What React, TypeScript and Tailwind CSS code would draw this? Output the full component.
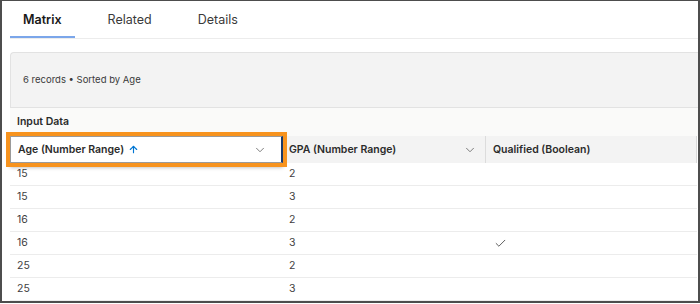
import { Check, ChevronDown, ArrowUp } from "lucide-react";

const rows = [
  { age: "15", gpa: "2", ok: false },
  { age: "15", gpa: "3", ok: false },
  { age: "16", gpa: "2", ok: false },
  { age: "16", gpa: "3", ok: true },
  { age: "25", gpa: "2", ok: false },
  { age: "25", gpa: "3", ok: false },
];

const tabs = ["Matrix", "Related", "Details"];

export default function App() {
  return (
    <div className="w-[700px] h-[304px] bg-white font-['Inter',sans-serif] text-[#181818]">
      <div className="h-[303px] border-t border-x-2 border-b-2 border-[#4d4d4d] overflow-hidden pl-2">
        {/* Tabs */}
        <div className="flex h-[38px] items-stretch gap-[20px] border-b border-[#ececec]">
          {tabs.map((t, i) => (
            <div
              key={t}
              className={
                i === 0
                  ? "flex items-center px-[13px] pt-[3px] text-[12.5px] font-semibold text-[#181818] border-b-2 border-[#7ba6ea]"
                  : "flex items-center px-[13px] pt-[3px] text-[12.5px] text-[#3a3a3a] border-b-2 border-transparent"
              }
            >
              {t}
            </div>
          ))}
        </div>

        <div className="mt-[13px]">
          {/* Summary panel */}
          <div className="h-[56px] rounded-tl-[4px] border border-r-0 border-[#e2e2e2] bg-[#f3f3f3] flex items-center pl-[12px] text-[9.5px] text-[#3a3a3a]">
            6 records • Sorted by Age
          </div>

          {/* Input Data */}
          <div className="h-[28px] bg-[#fafaf9] flex items-center pl-[7px] text-[10.5px] font-semibold text-[#2b2b2b]">
            Input Data
          </div>

          {/* Table */}
          <div className="pr-[1px]">
            <div className="relative flex h-[27px] bg-[#f3f3f3] border-r border-[#d9d9d9] text-[10.5px] font-semibold text-[#2b2b2b]">
              <div className="relative z-10 w-[273px] flex items-center justify-between bg-white pl-[7px] pr-[14px] border border-[#9a9a9a] border-r-2 border-r-[#1b3a6b] outline-4 outline-solid outline-[#f7931e] shadow-[0_4px_4px_rgba(0,0,0,0.35)]">
                <span className="flex items-center gap-[4px]">
                  Age (Number Range)
                  <ArrowUp size={11} strokeWidth={2.5} className="text-[#0176d3]" />
                </span>
                <ChevronDown size={14} strokeWidth={1.5} className="text-[#6b6b6b]" />
              </div>
              <div className="w-[203px] flex items-center justify-between pl-[6px] pr-[8px] border-r border-[#dcdcdc]">
                <span>GPA (Number Range)</span>
                <ChevronDown size={14} strokeWidth={1.5} className="text-[#6b6b6b]" />
              </div>
              <div className="flex-1 flex items-center pl-[7px]">Qualified (Boolean)</div>
            </div>

            {rows.map((r, i) => (
              <div
                key={i}
                className="flex h-[23px] bg-white border-b border-[#ececec] text-[10.5px] text-[#3e3e3e]"
              >
                <div className="w-[273px] flex items-center pl-[7px]">{r.age}</div>
                <div className="w-[203px] flex items-center pl-[6px]">{r.gpa}</div>
                <div className="flex-1 flex items-center pl-[8px]">
                  {r.ok && <Check size={13} strokeWidth={1.5} className="text-[#3a3a3a]" />}
                </div>
              </div>
            ))}
          </div>
        </div>
      </div>
    </div>
  );
}
